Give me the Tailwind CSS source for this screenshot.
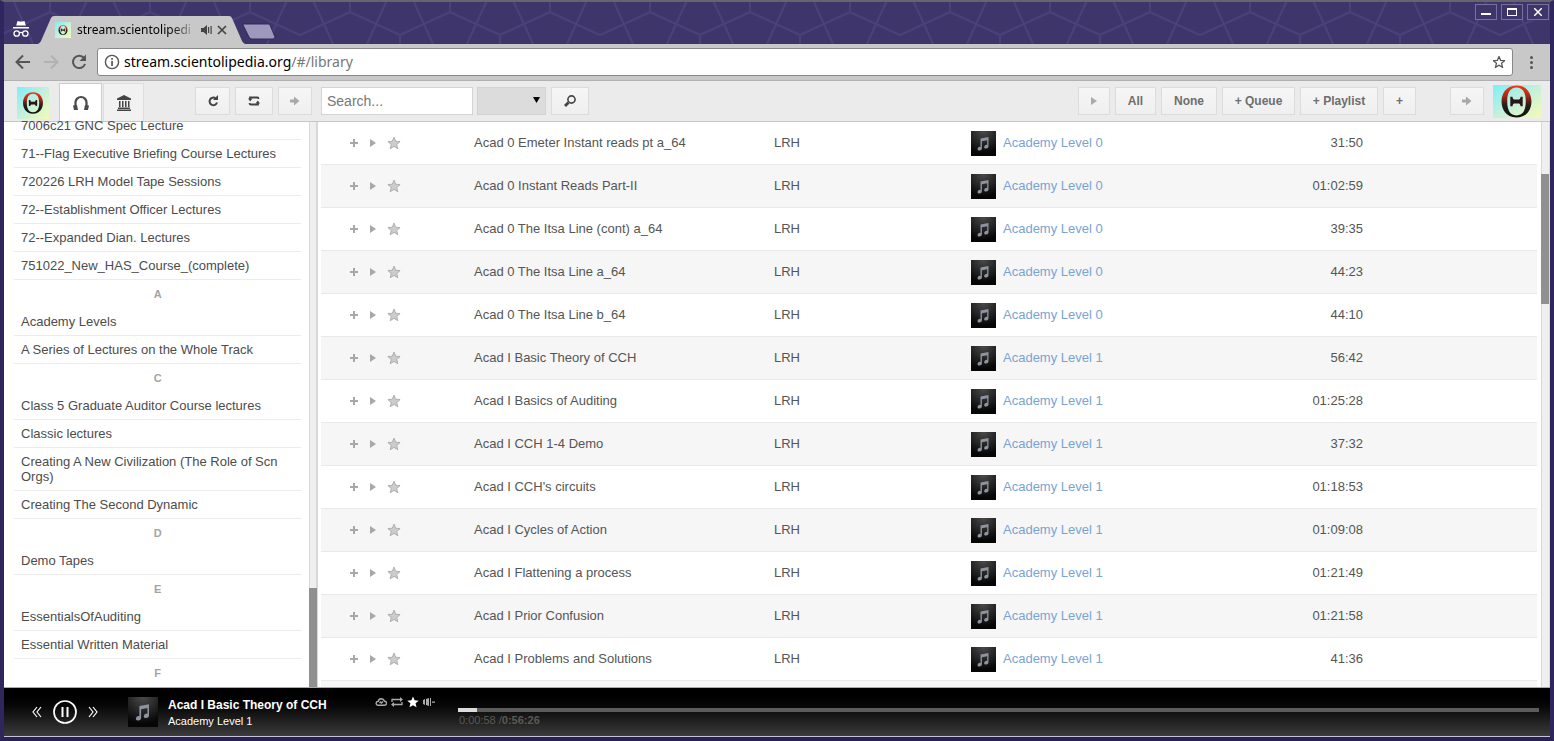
<!DOCTYPE html>
<html lang="en">
  <head>
    <meta charset="UTF-8" />
    <meta name="viewport" content="width=device-width, initial-scale=1.0" />
    <title>stream.scientolipedia.org</title>
    <script src="https://cdn.jsdelivr.net/npm/@tailwindcss/browser@4"></script>
  </head>
  <body class="bg-[#2a2158] font-['Liberation_Sans',sans-serif] text-[13px]">
    <!-- shared icons -->
    <svg class="absolute size-0">
      <defs>
        <linearGradient id="logoBg" x1="0" y1="0" x2="1" y2="1">
          <stop offset="0" stop-color="#7deef8" />
          <stop offset="0.5" stop-color="#c4f0dc" />
          <stop offset="1" stop-color="#f4fbb4" />
        </linearGradient>
        <linearGradient id="logoRing" x1="0" y1="0" x2="0" y2="1">
          <stop offset="0" stop-color="#f23a14" />
          <stop offset="0.3" stop-color="#b02a16" />
          <stop offset="0.6" stop-color="#2c1d1a" />
          <stop offset="1" stop-color="#0a120c" />
        </linearGradient>
        <radialGradient id="coverBg" cx="0.5" cy="0" r="0.9">
          <stop offset="0" stop-color="#4a4a4a" />
          <stop offset="1" stop-color="#060606" />
        </radialGradient>
      </defs>
      <symbol id="ring" viewBox="0 0 32 32">
        <path fill="url(#logoRing)" fill-rule="evenodd" d="M16 0.500C5.500 0.500 1.500 9 1.500 16S5.500 31.500 16 31.500 30.500 23 30.500 16 26.500.5 16 .5zM16 2.500c7 0 9 6.500 9 13.500s-2 13.500-9 13.500S7 23 7 16 9 2.500 16 2.500z" />
        <path fill="#2a1614" d="M10 11.500h2q.5 2.500 1.500 2.500h5q1 0 1.500-2.500h2v9h-2q-.5-2.500-1.500-2.500h-5q-1 0-1.500 2.500h-2z" />
      </symbol>
      <symbol id="cover" viewBox="0 0 25 25">
        <path fill="url(#coverBg)" d="M0 0h25v25H0z" />
        <path fill="#8d949f" d="M9.500 7.500l8-1.500v9.500a2.200 1.800 -20 1 1-1.300-1.600V9.200l-5.300 1v7.300a2.200 1.800 -20 1 1-1.400-1.600z" />
      </symbol>
      <symbol id="star" viewBox="0 0 24 24">
        <path d="M12 1l3.200 7.700 8.300.6-6.400 5.300 2 8.100L12 18.300l-7.100 4.400 2-8.100L.5 9.300l8.300-.6z" />
      </symbol>
      <symbol id="arrow" viewBox="0 0 10 10">
        <path d="M0 3.500h4V.5L9.500 5 4 9.500v-3H0z" />
      </symbol>
    </svg>

    <div class="flex h-screen flex-col overflow-hidden border-t-2 border-r-4 border-b-4 border-l-4 border-t-[#66656e] border-r-[#2e265c] border-b-[#2a2158] border-l-[#2e265c]">
      <!-- title bar -->
      <div class="relative flex h-[42px] shrink-0 items-end bg-[#3e366b]">
        <svg class="absolute inset-0 size-full">
          <defs>
            <pattern id="mesh" width="300" height="44" patternUnits="userSpaceOnUse" x="-4" y="-2">
              <path fill="none" stroke="#4a417b" stroke-width="2" d="M0 35l50-23 50 23 50-23 50 23 50-23 50 23M50 0v12M150 0v12M250 0v12M100 35v9M200 35v9M13 0l20 44M113 0l20 44M213 0l20 44M87 0L67 44M187 0l-20 44M287 0l-20 44" />
            </pattern>
          </defs>
          <rect width="100%" height="100%" fill="url(#mesh)" />
        </svg>
        <svg class="relative mb-1.5 ml-2 h-[18px] w-[18px]" viewBox="0 0 18 18" fill="#fff">
          <path d="M5.500 1l2 .6h3l2-.6 1.300 4.500H4.200zM1 7h16v1.500H1z" />
          <g fill="none" stroke="#fff" stroke-width="1.300"><circle cx="4.700" cy="13.500" r="2.700" /><circle cx="13.300" cy="13.500" r="2.700" /><path d="M7.400 13q1.600-1.200 3.200 0" /></g>
        </svg>
        <div class="relative ml-2 flex h-7 w-[208px] items-center pl-[17px]">
          <svg class="absolute inset-0 size-full" viewBox="0 0 208 28" preserveAspectRatio="none">
            <path fill="#c8c8c8" d="M0 28q2-1 3-3L13 2q1-2 3-2h175q2 0 3 2l10 23q1 2 3 3z" />
          </svg>
          <svg class="relative size-4 shrink-0" viewBox="0 0 32 32"><path fill="url(#logoBg)" d="M0 0h32v32H0z" /><use href="#ring" x="6" y="5" width="20" height="22" /></svg>
          <span class="relative ml-1.5 w-[118px] bg-linear-to-r from-black from-75% to-[#bbb] bg-clip-text font-['Noto_Sans',sans-serif] text-xs whitespace-nowrap text-transparent">stream.scientolipedi</span>
          <svg class="relative ml-1.5 h-2.5 w-3" viewBox="0 0 12 10" fill="#444"><path d="M0 3h2.500L6 0v10L2.500 7H0zM7 2h1.200v6H7zM9.500 1h1.200v8H9.500z" /></svg>
          <button class="relative ml-1 p-0" aria-label="Close tab">
            <svg class="size-2.5" viewBox="0 0 10 10" stroke="#444" stroke-width="1.700"><path d="M1 1l8 8M9 1L1 9" /></svg>
          </button>
        </div>
        <button class="relative -ml-1 mb-1 p-0" aria-label="New tab">
          <svg class="h-[17px] w-9" viewBox="0 0 36 17"><path fill="#9f98bd" stroke="#30285c" d="M1 1h25q2 0 2 1l5 12q0 2-2 2H10q-2 0-3-2L1 2z" /></svg>
        </button>
        <div class="absolute top-0.5 right-0 flex gap-1 pr-px">
          <button class="flex h-4 w-[22px] items-center justify-center border border-[#77719b] bg-[#3e366b]" aria-label="Minimize"><span class="mt-1 h-0.5 w-2.5 bg-white"></span></button>
          <button class="flex h-4 w-[22px] items-center justify-center border border-[#77719b] bg-[#3e366b]" aria-label="Maximize"><span class="h-2 w-2.5 border border-t-2 border-white"></span></button>
          <button class="flex h-4 w-[22px] items-center justify-center border border-[#77719b] bg-[#3e366b]" aria-label="Close"><svg class="size-2" viewBox="0 0 8 8" stroke="#fff" stroke-width="1.500"><path d="M0 0l8 8M8 0L0 8" /></svg></button>
        </div>
      </div>

      <!-- address bar -->
      <div class="flex h-[37px] shrink-0 items-center border-b border-[#b0b0b0] bg-[#c8c8c8] pl-2.5">
        <button aria-label="Back"><svg class="size-[18px]" viewBox="0 0 18 18" fill="none" stroke="#555" stroke-width="2"><path d="M16 9H3M9 2.500L2.500 9 9 15.500" /></svg></button>
        <button class="ml-2.5" aria-label="Forward"><svg class="size-[18px]" viewBox="0 0 18 18" fill="none" stroke="#b2b2b2" stroke-width="2"><path d="M2 9h13M9 2.500L15.500 9 9 15.500" /></svg></button>
        <button class="ml-2.5" aria-label="Reload"><svg class="size-[18px]" viewBox="0 0 18 18"><path fill="none" stroke="#555" stroke-width="2" d="M14 5A6.200 6.200 0 1 0 15 11" /><path fill="#555" d="M16 1.500V8H9.500z" /></svg></button>
        <div class="ml-[9px] flex h-7 grow items-center rounded-[3px] border border-[#888] bg-white px-1.5">
          <svg class="size-4 shrink-0" viewBox="0 0 16 16"><circle cx="8" cy="8" r="6.600" fill="none" stroke="#555" stroke-width="1.400" /><path fill="#555" d="M7.200 7h1.700v5H7.200zM7.200 4h1.700v1.700H7.200z" /></svg>
          <p class="ml-1 grow font-['Noto_Sans',sans-serif] text-sm">stream.scientolipedia.org<span class="text-[#777]">/#/library</span></p>
          <svg class="size-3.5" viewBox="-2 -1 28 26" fill="none" stroke="#555" stroke-width="2.500"><use href="#star" width="24" height="24" /></svg>
        </div>
        <button class="mx-[17px] flex flex-col gap-0.5" aria-label="Menu">
          <span class="size-[3px] rounded-full bg-[#555]"></span><span class="size-[3px] rounded-full bg-[#555]"></span><span class="size-[3px] rounded-full bg-[#555]"></span>
        </button>
      </div>

      <!-- app header -->
      <header class="flex h-[41px] shrink-0 items-center border-b border-[#c6c6c6] bg-[#ebebeb] pr-[9px] pl-[13px] text-xs font-bold text-[#6e6e6e]">
        <svg class="mt-1 size-8 shrink-0" viewBox="0 0 32 32"><path fill="url(#logoBg)" d="M0 0h32v32H0z" /><use href="#ring" x="5" y="5" width="22" height="22" /></svg>
        <nav class="ml-2.5 flex gap-px self-end">
          <a href="#" aria-label="Music" class="flex h-[38px] w-[43px] items-center justify-center border border-b-0 border-[#ccc] bg-white">
            <svg class="size-4" viewBox="0 0 16 16"><path fill="none" stroke="#4a4a4a" stroke-width="2.200" d="M2.500 12V7.500a5.500 5.500 0 0 1 11 0V12" /><path fill="#4a4a4a" d="M0 10.500l4-.5 1 5H1zM16 10.500l-4-.5-1 5h4z" /></svg>
          </a>
          <a href="#" aria-label="Library" class="flex h-[38px] w-[41px] items-center justify-center border border-b-0 border-[#dedede] bg-[#f1f1f1]">
            <svg class="size-4" viewBox="0 0 16 16" fill="#444"><path d="M8 0l7 3.500V5H1V3.500zM3 6h1.500v6H3zM6 6h1.500v6H6zM9 6h1.500v6H9zM12 6h1.500v6H12zM2 12.500h12V14H2zM1 14.500h14V16H1z" /></svg>
          </a>
        </nav>
        <div class="ml-[51px] flex items-center gap-[5px]">
          <button class="flex h-7 w-[35px] items-center justify-center border border-[#dcdcdc] bg-linear-to-b from-[#f6f6f6] to-[#efefef]" aria-label="Refresh">
            <svg class="size-3" viewBox="0 0 12 12"><path fill="none" stroke="#444" stroke-width="2" d="M8.500 3.200A3.800 3.800 0 1 0 10 7.500" /><path fill="#444" d="M6 5L11 0v5z" /></svg>
          </button>
          <button class="flex h-7 w-[38px] items-center justify-center border border-[#dcdcdc] bg-linear-to-b from-[#f6f6f6] to-[#efefef]" aria-label="Sync">
            <svg class="size-3" viewBox="0 0 12 12"><path fill="none" stroke="#444" stroke-width="1.800" d="M2 5V2.500h7.500q1 0 1 1.500M10 7v2.500H2.500q-1 0-1-1.500" /><path fill="#444" d="M0 3.500h4.500L2.200 6.500zM7.500 8.500H12L9.800 5.500z" /></svg>
          </button>
          <button class="flex h-7 w-[34px] items-center justify-center border border-[#dcdcdc] bg-linear-to-b from-[#f6f6f6] to-[#efefef]" aria-label="Next">
            <svg class="size-2.5" fill="#a8a8a8"><use href="#arrow" /></svg>
          </button>
        </div>
        <input type="text" placeholder="Search..." aria-label="Search" class="ml-[9px] h-7 w-[152px] border border-[#d4d4d4] bg-white px-[5px] text-sm font-normal placeholder:text-[#777]" />
        <div class="relative ml-1">
          <select aria-label="Filter" class="block h-7 w-[69px] appearance-none border border-[#d2d2d2] bg-[#dcdcdc]"><option></option></select>
          <svg class="pointer-events-none absolute top-2.5 right-1.5 h-1.5 w-[7px]" viewBox="0 0 7 6"><path d="M0 0h7L3.500 6z" /></svg>
        </div>
        <button class="ml-[5px] flex h-7 w-[38px] items-center justify-center border border-[#dcdcdc] bg-linear-to-b from-[#f6f6f6] to-[#efefef]" aria-label="Find">
          <svg class="size-3" viewBox="0 0 12 12" fill="none" stroke="#444"><circle cx="7.500" cy="4.500" r="3.600" stroke-width="1.600" /><path stroke-width="2.800" d="M4.500 7.500L1 11" /></svg>
        </button>
        <div class="ml-auto flex items-center gap-[5px]">
          <button class="flex h-7 w-8 items-center justify-center border border-[#dcdcdc] bg-linear-to-b from-[#f6f6f6] to-[#efefef]" aria-label="Play"><svg class="h-2 w-1.5" viewBox="0 0 6 8" fill="#aaa"><path d="M0 0l6 4-6 4z" /></svg></button>
          <button class="h-7 w-[41px] border border-[#dcdcdc] bg-linear-to-b from-[#f6f6f6] to-[#efefef]">All</button>
          <button class="h-7 w-14 border border-[#dcdcdc] bg-linear-to-b from-[#f6f6f6] to-[#efefef]">None</button>
          <button class="h-7 w-[73px] border border-[#dcdcdc] bg-linear-to-b from-[#f6f6f6] to-[#efefef]">+ Queue</button>
          <button class="h-7 w-[78px] border border-[#dcdcdc] bg-linear-to-b from-[#f6f6f6] to-[#efefef]">+ Playlist</button>
          <button class="h-7 w-[33px] border border-[#dcdcdc] bg-linear-to-b from-[#f6f6f6] to-[#efefef]">+</button>
        </div>
        <button class="ml-[34px] flex h-7 w-[34px] items-center justify-center border border-[#dcdcdc] bg-linear-to-b from-[#f6f6f6] to-[#efefef]" aria-label="Forward"><svg class="size-2.5" fill="#a8a8a8"><use href="#arrow" /></svg></button>
        <svg class="ml-[9px] h-[33px] w-12 shrink-0" viewBox="0 0 48 33"><path fill="url(#logoBg)" d="M0 0h48v33H0z" /><use href="#ring" x="7" width="33" height="33" /></svg>
      </header>

      <!-- lists -->
      <div class="flex min-h-0 grow bg-white">
        <aside class="flex w-[313px] shrink-0">
          <ul id="playlists" class="-mt-2.5 grow overflow-hidden pr-2 pl-2.5 leading-[15px] text-[#4c4c4c]"></ul>
          <div class="flex w-2 flex-col justify-end border-x border-[#d8d8d8] bg-[#efefef]">
            <div class="-mx-px h-[99px] bg-[#909090]"></div>
          </div>
        </aside>
        <main class="flex min-w-0 grow">
          <div class="grow overflow-hidden border-l border-[#d8d8d8] pr-1 pl-[3px]">
            <table class="w-full table-fixed border-separate border-spacing-0 text-left text-[#555]">
              <colgroup>
                <col class="w-[153px]" />
                <col class="w-[300px]" />
                <col class="w-[197px]" />
                <col />
                <col class="w-[120px]" />
                <col class="w-[174px]" />
              </colgroup>
              <tbody id="songs" class="*:*:border-b *:*:border-[#e9e9e9]"></tbody>
            </table>
          </div>
          <div class="w-[9px] shrink-0 border-x border-[#d8d8d8] bg-[#efefef] pt-[52px]">
            <div class="-ml-px h-[130px] bg-[#909090]"></div>
          </div>
        </main>
      </div>

      <!-- player -->
      <footer class="flex h-[50px] shrink-0 border-t border-b border-t-[#aaa] border-b-[#c4c4d4] bg-linear-to-b from-black to-[#3c3c3c] pr-[11px] pl-7 text-[11px] text-white">
        <div class="flex items-center gap-[11px]">
          <button aria-label="Previous"><svg class="h-3 w-2.5" viewBox="0 0 10 12" fill="none" stroke="#fff" stroke-width="1.200"><path d="M5 1L1 6l4 5M9 1L5 6l4 5" /></svg></button>
          <button aria-label="Pause"><svg class="size-6" viewBox="0 0 24 24" fill="none" stroke="#fff"><circle cx="12" cy="12" r="11" stroke-width="1.700" /><path stroke-width="2" d="M9.500 7v10M14.500 7v10" /></svg></button>
          <button aria-label="Next"><svg class="h-3 w-2.5" viewBox="0 0 10 12" fill="none" stroke="#fff" stroke-width="1.200"><path d="M1 1l4 5-4 5M5 1l4 5-4 5" /></svg></button>
        </div>
        <svg class="ml-[30px] size-[30px] self-center"><use href="#cover" /></svg>
        <div class="ml-2.5 w-[207px] pt-2">
          <p class="text-xs leading-[18px] font-bold">Acad I Basic Theory of CCH</p>
          <p class="leading-[14px]">Academy Level 1</p>
        </div>
        <div class="flex h-7 w-[83px] items-center gap-1">
          <svg class="h-2 w-3" viewBox="0 0 12 8" fill="none" stroke="#aaa" stroke-width="1.400"><path d="M3 7.300h6.500a2 2 0 0 0 0-4Q8.500.7 6 .7 3.700.8 3.300 3.300a2 2 0 0 0-.3 4zM4.500 5L6 3.500M6 5.500l2-2" /></svg>
          <svg class="h-2.5 w-3" viewBox="0 0 12 10"><path fill="none" stroke="#aaa" stroke-width="1.300" d="M1 5V2.500h8.500M11 5v2.500H2.500" /><path fill="#aaa" d="M9 0l3 2.500L9 5zM3 5L0 7.500 3 10z" /></svg>
          <svg class="size-3" fill="#fff"><use href="#star" /></svg>
          <svg class="h-2 w-3" viewBox="0 0 12 8" fill="#aaa"><path d="M0 2l2-1v6L0 6zM3 1l3-1v8L3 7zM7 0h1v8H7zM9 3.500h3v1.200H9z" /></svg>
        </div>
        <div class="grow pt-5">
          <div class="h-1 bg-[#5c5c5c]"><div class="h-full bg-[#dcdcdc]" style="width: 1.8%"></div></div>
          <p class="pl-px leading-4 text-[#5a5a52]">0:00:58 /<b>0:56:26</b></p>
        </div>
      </footer>
    </div>

    <script>
      // single letters are section headings
      const playlists = [
        "7006c21 GNC Spec Lecture",
        "71--Flag Executive Briefing Course Lectures",
        "720226 LRH Model Tape Sessions",
        "72--Establishment Officer Lectures",
        "72--Expanded Dian. Lectures",
        "751022_New_HAS_Course_(complete)",
        "A",
        "Academy Levels",
        "A Series of Lectures on the Whole Track",
        "C",
        "Class 5 Graduate Auditor Course lectures",
        "Classic lectures",
        "Creating A New Civilization (The Role of Scn Orgs)",
        "Creating The Second Dynamic",
        "D",
        "Demo Tapes",
        "E",
        "EssentialsOfAuditing",
        "Essential Written Material",
        "F",
      ];

      const songs = [
        ["Acad 0 Emeter Instant reads pt a_64", 0, "31:50"],
        ["Acad 0 Instant Reads Part-II", 0, "01:02:59"],
        ["Acad 0 The Itsa Line (cont) a_64", 0, "39:35"],
        ["Acad 0 The Itsa Line a_64", 0, "44:23"],
        ["Acad 0 The Itsa Line b_64", 0, "44:10"],
        ["Acad I Basic Theory of CCH", 1, "56:42"],
        ["Acad I Basics of Auditing", 1, "01:25:28"],
        ["Acad I CCH 1-4 Demo", 1, "37:32"],
        ["Acad I CCH's circuits", 1, "01:18:53"],
        ["Acad I Cycles of Action", 1, "01:09:08"],
        ["Acad I Flattening a process", 1, "01:21:49"],
        ["Acad I Prior Confusion", 1, "01:21:58"],
        ["Acad I Problems and Solutions", 1, "41:36"],
      ];

      document.getElementById("playlists").innerHTML = playlists
        .map((name) =>
          name.length === 1
            ? `<li class="h-7 pt-[7px] text-center text-[11px] font-bold text-[#a4a4a4]">${name}</li>`
            : `<li class="border-b border-[#ececec] px-[7px] py-1.5"><a href="#">${name}</a></li>`
        )
        .join("");

      document.getElementById("songs").innerHTML =
        songs
          .map(
            ([title, level, time]) => `
          <tr class="h-[43px] even:bg-[#f6f6f6]">
            <td class="pl-7">
              <div class="flex items-center gap-2.5">
                <button aria-label="Add"><svg class="size-2.5" viewBox="0 0 10 10" stroke="#a8a8a8" stroke-width="2"><path d="M5 1v8M1 5h8" /></svg></button>
                <button aria-label="Play"><svg class="h-2 w-2" viewBox="0 0 8 8" fill="#a8a8a8"><path d="M1 0l6 4-6 4z" /></svg></button>
                <button aria-label="Favourite"><svg class="size-3.5" viewBox="-1 -1 26 26" fill="#ccc" stroke="#a4a4a4" stroke-width="1.500"><use href="#star" width="24" height="24" /></svg></button>
              </div>
            </td>
            <td>${title}</td>
            <td>LRH</td>
            <td><div class="flex items-center gap-[7px]"><svg class="size-[25px]"><use href="#cover" /></svg><a href="#" class="text-[#79a3d3]">Academy Level ${level}</a></div></td>
            <td class="text-right">${time}</td>
            <td></td>
          </tr>`
          )
          .join("") + `<tr class="h-[43px] bg-[#f6f6f6]"><td colspan="6"></td></tr>`;
    </script>
  </body>
</html>
